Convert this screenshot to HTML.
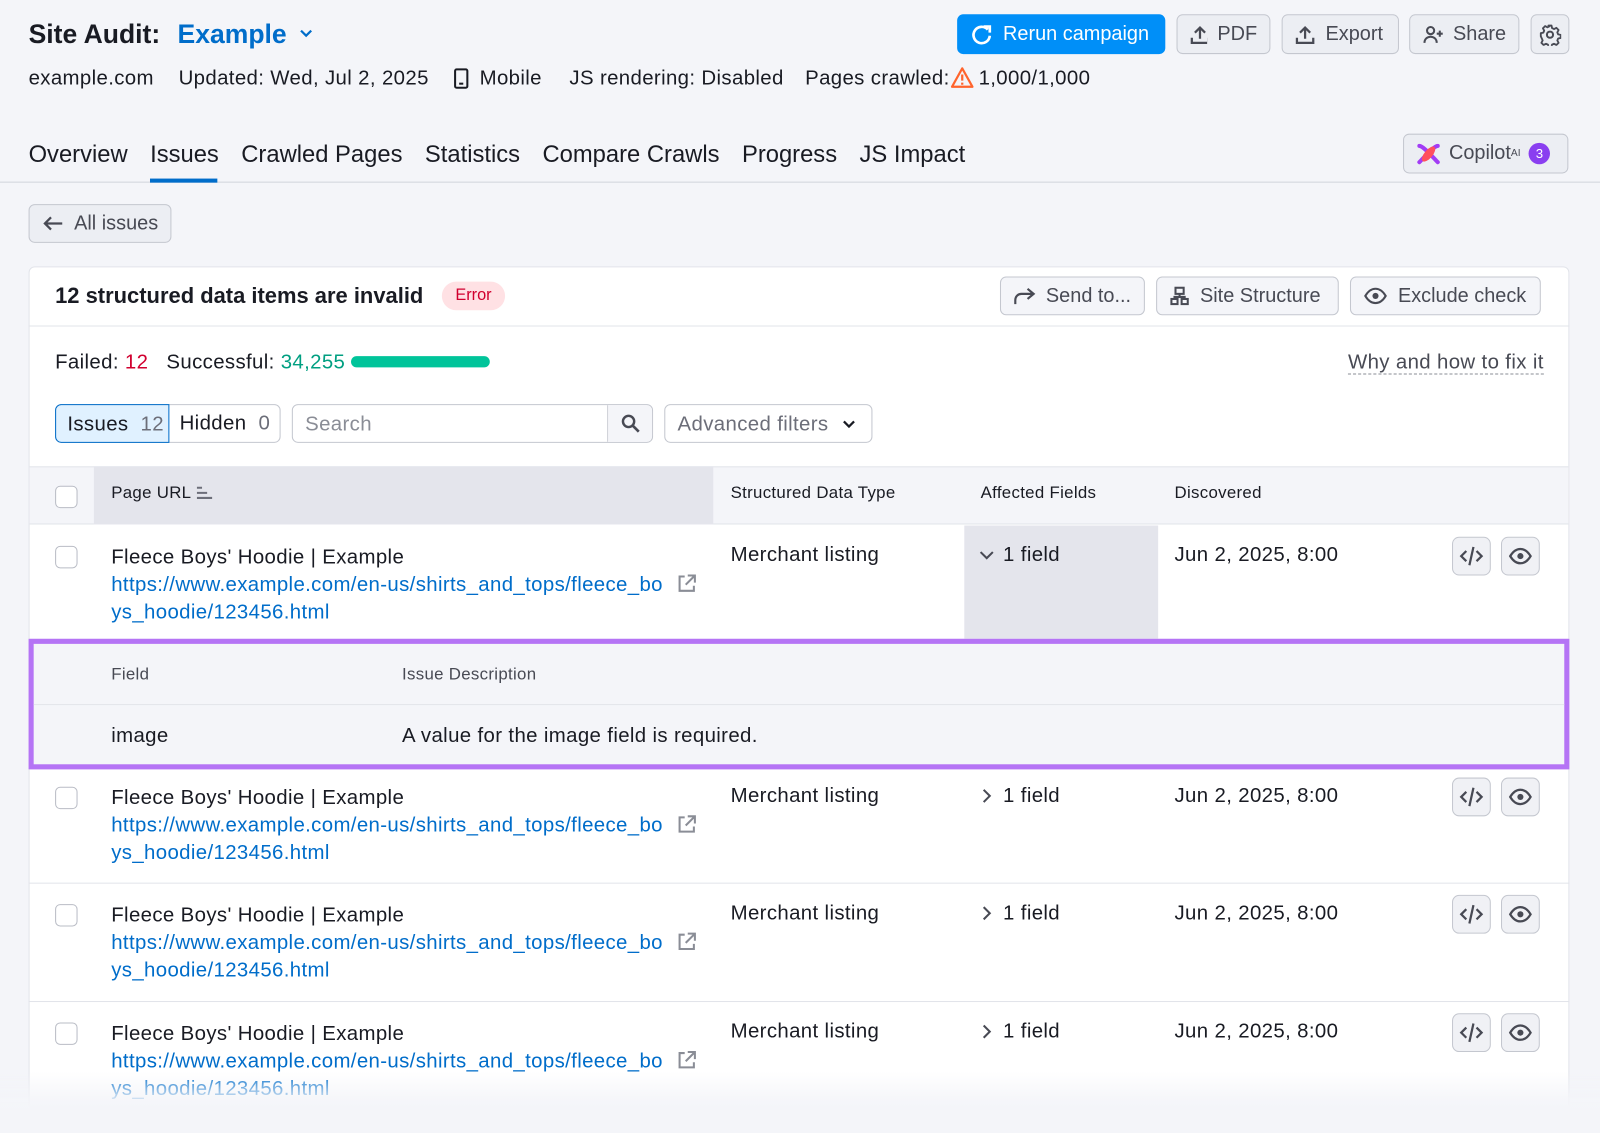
<!DOCTYPE html>
<html><head><meta charset="utf-8"><style>
*{box-sizing:border-box;margin:0;padding:0}
html,body{width:1600px;height:1104px;overflow:hidden;background:#f4f5f9}
body{font-family:"Liberation Sans",sans-serif;color:#191b23}
#w{position:absolute;left:0;top:0;width:1568px;height:1082px;transform:scale(1.0204);transform-origin:0 0}
.abs{position:absolute;white-space:nowrap}
.btn{position:absolute;border:1px solid #c4c7cf;border-radius:6px;background:#eceef3;color:#484a54;font-size:19.5px;display:flex;align-items:center;gap:10px;padding:0 12px;height:38px;white-space:nowrap}
.wbtn{background:#f4f5f9}
svg{display:block}
.t19{font-size:20px;letter-spacing:.35px}
.th{font-size:16.5px;letter-spacing:.3px}
.cb{position:absolute;width:22px;height:22px;border:1.5px solid #b9bcc5;border-radius:5px;background:#fff}
.link{color:#006dca}
.ico{position:absolute;width:38px;height:38px;border:1px solid #c4c7cf;border-radius:7px;background:#f0f1f5;display:flex;align-items:center;justify-content:center}
</style></head><body><div id="w">
<div class="abs" style="left:28px;top:18px;font-size:26px;font-weight:bold">Site Audit:</div>
<div class="abs" style="left:174px;top:18px;font-size:26px;font-weight:bold;color:#006dca">Example</div>
<svg class="abs" style="left:292px;top:26px" width="16" height="14"><path d="M3 4l5 5 5-5" stroke="#006dca" stroke-width="2.2" fill="none"/></svg>
<div class="abs t19" style="left:28px;top:66px">example.com</div>
<div class="abs t19" style="left:175px;top:66px">Updated: Wed, Jul 2, 2025</div>
<svg class="abs" style="left:444px;top:66px" width="16" height="22"><rect x="2" y="2" width="12" height="18" rx="1.5" stroke="#191b23" stroke-width="2" fill="none"/><rect x="6" y="15" width="4" height="2" fill="#191b23"/></svg>
<div class="abs t19" style="left:470px;top:66px">Mobile</div>
<div class="abs t19" style="left:558px;top:66px">JS rendering: Disabled</div>
<div class="abs t19" style="left:789px;top:66px">Pages crawled:</div>
<svg class="abs" style="left:931px;top:64px" width="24" height="24"><path d="M12 3L22 21H2Z" stroke="#ff642d" stroke-width="2.2" fill="none" stroke-linejoin="round"/><path d="M12 9v6M12 17v2" stroke="#ff642d" stroke-width="2.2"/></svg>
<div class="abs t19" style="left:959px;top:66px">1,000/1,000</div>

<div class="btn" style="left:938px;top:14px;width:204px;height:39px;background:#008ff8;border-color:#008ff8;color:#fff;font-size:19.5px">
<svg width="22" height="22"><path d="M17 6A8 8 0 1 0 19 12" stroke="#fff" stroke-width="2.6" fill="none"/><path d="M13 3h6v6" stroke="#fff" stroke-width="2.6" fill="none"/></svg>Rerun campaign</div>
<div class="btn" style="left:1153px;top:14px;width:92px;height:39px"><svg width="20" height="20"><path d="M10 14V3M5 8l5-5 5 5M2 13v5h16v-5" stroke="#484a54" stroke-width="2.2" fill="none"/></svg>PDF</div>
<div class="btn" style="left:1256px;top:14px;width:115px;height:39px"><svg width="20" height="20"><path d="M10 14V3M5 8l5-5 5 5M2 13v5h16v-5" stroke="#484a54" stroke-width="2.2" fill="none"/></svg>Export</div>
<div class="btn" style="left:1381px;top:14px;width:108px;height:39px"><svg width="22" height="20"><circle cx="8" cy="6" r="3.5" stroke="#484a54" stroke-width="2" fill="none"/><path d="M2 18c0-4 3-6 6-6s6 2 6 6" stroke="#484a54" stroke-width="2" fill="none"/><path d="M17 6v6M14 9h6" stroke="#484a54" stroke-width="2"/></svg>Share</div>
<div class="btn" style="left:1500px;top:14px;width:38px;height:39px;padding:0;justify-content:center"><svg width="22" height="22" viewBox="0 0 22 22"><circle cx="11" cy="11" r="3" stroke="#484a54" stroke-width="2" fill="none"/><path d="M9.5 2h3l.5 2.5 2 1 2.3-1.2 2.1 2.1-1.2 2.3.8 2 2.5.5v3l-2.5.5-.8 2 1.2 2.3-2.1 2.1-2.3-1.2-2 .8-.5 2.5h-3l-.5-2.5-2-.8-2.3 1.2-2.1-2.1 1.2-2.3-.8-2L2 12.5v-3l2.5-.5.8-2-1.2-2.3 2.1-2.1 2.3 1.2 2-1z" stroke="#484a54" stroke-width="1.8" fill="none" stroke-linejoin="round"/></svg></div>

<div class="abs" style="left:0;top:178px;width:1600px;height:1px;background:#d1d4db"></div>
<div class="abs" style="left:28px;top:138px;font-size:23.3px;display:flex;gap:22px;white-space:nowrap"><span>Overview</span><span>Issues</span><span>Crawled Pages</span><span>Statistics</span><span>Compare Crawls</span><span>Progress</span><span>JS Impact</span></div>
<div class="abs" style="left:147px;top:175px;width:66px;height:4px;background:#006dca"></div>
<div class="btn" style="left:1375px;top:131px;width:162px;height:39px;font-size:19.5px;gap:8px">
<svg width="24" height="24"><path d="M3 4c4 0 14 12 18 16M21 4C17 4 7 16 3 20" stroke="#a23cf5" stroke-width="4" stroke-linecap="round"/><ellipse cx="12" cy="12" rx="4" ry="9" transform="rotate(40 12 12)" fill="#ff4f5e"/></svg>Copilot<sup style="font-size:10px;margin-left:-8px">AI</sup><span style="width:21px;height:21px;border-radius:50%;background:#8a3ff0;color:#fff;font-size:13px;display:flex;align-items:center;justify-content:center">3</span></div>

<div class="btn" style="left:28px;top:200px;width:140px;height:38px"><svg width="22" height="16"><path d="M20 8H3M9 2L3 8l6 6" stroke="#484a54" stroke-width="2.2" fill="none"/></svg>All issues</div>

<div class="abs" style="left:28px;top:261px;width:1510px;height:843px;background:#fff;border:1px solid #e2e4ea;border-radius:6px"></div>
<div class="abs" style="left:28px;top:319px;width:1510px;height:1px;background:#e2e4ea"></div>
<div class="abs" style="left:54px;top:278px;font-size:21.5px;font-weight:bold">12 structured data items are invalid</div>
<div class="abs" style="left:433px;top:276px;width:62px;height:28px;border-radius:14px;background:#ffe1e4;color:#d1002f;font-size:16px;display:flex;align-items:center;justify-content:center">Error</div>
<div class="btn wbtn" style="left:980px;top:271px;width:142px"><svg width="22" height="20"><path d="M2 18v-4a6 6 0 0 1 6-6h12M14 3l6 5-6 5" stroke="#484a54" stroke-width="2.1" fill="none"/></svg>Send to...</div>
<div class="btn wbtn" style="left:1133px;top:271px;width:179px"><svg width="20" height="20"><rect x="6" y="2" width="8" height="6" stroke="#484a54" stroke-width="2" fill="none"/><rect x="2" y="13" width="6" height="5" stroke="#484a54" stroke-width="2" fill="none"/><rect x="12" y="13" width="6" height="5" stroke="#484a54" stroke-width="2" fill="none"/><path d="M10 8v3M5 13v-2h10v2" stroke="#484a54" stroke-width="2" fill="none"/></svg>Site Structure</div>
<div class="btn wbtn" style="left:1323px;top:271px;width:187px"><svg width="24" height="20"><path d="M2 10c3-5 6-7 10-7s7 2 10 7c-3 5-6 7-10 7S5 15 2 10z" stroke="#484a54" stroke-width="2" fill="none"/><circle cx="12" cy="10" r="3" fill="#484a54"/></svg>Exclude check</div>

<div class="abs t19" style="left:54px;top:344px">Failed: <span style="color:#d1002f">12</span>&nbsp;&nbsp;&nbsp;Successful: <span style="color:#009f81">34,255</span></div>
<div class="abs" style="left:344px;top:349px;width:136px;height:11px;border-radius:6px;background:#00c49a"></div>
<div class="abs t19" style="left:1321px;top:344px;color:#484a54;border-bottom:1.5px dashed #8a8d96;line-height:22px">Why and how to fix it</div>

<div class="abs" style="left:54px;top:396px;width:221px;height:38px;border:1px solid #c4c7cf;border-radius:6px;background:#fff"></div>
<div class="abs t19" style="left:54px;top:396px;width:112px;height:38px;border:1px solid #006dca;border-radius:6px 0 0 6px;background:#e0f1ff;padding:8px 11px">Issues <span style="color:#6c6e79">&nbsp;12</span></div>
<div class="abs t19" style="left:176px;top:404px">Hidden <span style="color:#6c6e79">&nbsp;0</span></div>
<div class="abs t19" style="left:286px;top:396px;width:354px;height:38px;border:1px solid #c4c7cf;border-radius:6px;background:#fff;color:#8a8d96;padding:8px 12px">Search</div>
<div class="abs" style="left:595px;top:397px;width:44px;height:36px;border-left:1px solid #c4c7cf;background:#f4f5f9;border-radius:0 6px 6px 0"><svg style="margin:8px 12px" width="20" height="20"><circle cx="8" cy="8" r="5.5" stroke="#484a54" stroke-width="2.4" fill="none"/><path d="M12 12l6 6" stroke="#484a54" stroke-width="2.6"/></svg></div>
<div class="abs t19" style="left:651px;top:396px;width:204px;height:38px;border:1px solid #c4c7cf;border-radius:6px;background:#fff;color:#6c6e79;padding:8px 12px">Advanced filters</div>
<svg class="abs" style="left:824px;top:409px" width="16" height="14"><path d="M3 4l5 5 5-5" stroke="#191b23" stroke-width="2.2" fill="none"/></svg>

<div class="abs" style="left:29px;top:457px;width:1508px;height:57px;background:#f4f5f9;border-top:1px solid #e2e4ea;border-bottom:1px solid #e2e4ea"></div>
<div class="abs" style="left:92px;top:457px;width:607px;height:57px;background:#e4e5ec"></div>
<div class="cb" style="left:54px;top:476px"></div>
<div class="abs th" style="left:109px;top:474px">Page URL</div>
<svg class="abs" style="left:192px;top:476px" width="16" height="14"><path d="M1 2h5M1 7h10M1 12h15" stroke="#6c6e79" stroke-width="2"/></svg>
<div class="abs th" style="left:716px;top:474px">Structured Data Type</div>
<div class="abs th" style="left:961px;top:474px">Affected Fields</div>
<div class="abs th" style="left:1151px;top:474px">Discovered</div>

<div class="abs" style="left:945px;top:515px;width:190px;height:111px;background:#e4e5ec"></div>
<div class="abs" style="left:28px;top:626px;width:1510px;height:128px;border:5px solid #b574f5;background:#f4f5f9"></div>
<div class="abs" style="left:33px;top:690px;width:1500px;height:1px;background:#e2e4ea"></div>
<div class="abs th" style="left:109px;top:652px;color:#484a54">Field</div>
<div class="abs th" style="left:394px;top:652px;color:#484a54">Issue Description</div>
<div class="abs t19" style="left:109px;top:710px">image</div>
<div class="abs t19" style="left:394px;top:710px">A value for the image field is required.</div>

<div class="abs" style="left:28px;top:865px;width:1510px;height:1px;background:#e2e4ea"></div>
<div class="abs" style="left:28px;top:981px;width:1510px;height:1px;background:#e2e4ea"></div>

<div class="cb" style="left:54px;top:535px"></div>
<div class="abs t19" style="left:109px;top:533px;line-height:27px">Fleece Boys' Hoodie | Example<br><span class="link">https://www.example.com/en-us/shirts_and_tops/fleece_bo<br>ys_hoodie/123456.html</span></div>
<svg class="abs" style="left:663px;top:562px" width="20" height="20"><path d="M8 3H3v14h14v-5" stroke="#8a8d96" stroke-width="2" fill="none"/><path d="M11 2h7v7M18 2l-9 9" stroke="#8a8d96" stroke-width="2" fill="none"/></svg>
<div class="abs t19" style="left:716px;top:533px">Merchant listing</div>
<svg class="abs" style="left:959px;top:537px" width="16" height="14"><path d="M2 4l6 6 6-6" stroke="#484a54" stroke-width="2" fill="none"/></svg>
<div class="abs t19" style="left:983px;top:533px">1 field</div>
<div class="abs t19" style="left:1151px;top:533px">Jun 2, 2025, 8:00</div>
<div class="ico" style="left:1423px;top:526px"><svg width="24" height="22"><path d="M7 6l-5 5 5 5M17 6l5 5-5 5M14 2l-4 18" stroke="#484a54" stroke-width="2.2" fill="none"/></svg></div>
<div class="ico" style="left:1471px;top:526px"><svg width="24" height="20"><path d="M2 10c3-5 6-7 10-7s7 2 10 7c-3 5-6 7-10 7S5 15 2 10z" stroke="#484a54" stroke-width="2.2" fill="none"/><circle cx="12" cy="10" r="3" fill="#484a54"/></svg></div>

<div class="cb" style="left:54px;top:771px"></div>
<div class="abs t19" style="left:109px;top:769px;line-height:27px">Fleece Boys' Hoodie | Example<br><span class="link">https://www.example.com/en-us/shirts_and_tops/fleece_bo<br>ys_hoodie/123456.html</span></div>
<svg class="abs" style="left:663px;top:798px" width="20" height="20"><path d="M8 3H3v14h14v-5" stroke="#8a8d96" stroke-width="2" fill="none"/><path d="M11 2h7v7M18 2l-9 9" stroke="#8a8d96" stroke-width="2" fill="none"/></svg>
<div class="abs t19" style="left:716px;top:769px">Merchant listing</div>
<svg class="abs" style="left:960px;top:772px" width="14" height="16"><path d="M4 2l6 6-6 6" stroke="#484a54" stroke-width="2" fill="none"/></svg>
<div class="abs t19" style="left:983px;top:769px">1 field</div>
<div class="abs t19" style="left:1151px;top:769px">Jun 2, 2025, 8:00</div>
<div class="ico" style="left:1423px;top:762px"><svg width="24" height="22"><path d="M7 6l-5 5 5 5M17 6l5 5-5 5M14 2l-4 18" stroke="#484a54" stroke-width="2.2" fill="none"/></svg></div>
<div class="ico" style="left:1471px;top:762px"><svg width="24" height="20"><path d="M2 10c3-5 6-7 10-7s7 2 10 7c-3 5-6 7-10 7S5 15 2 10z" stroke="#484a54" stroke-width="2.2" fill="none"/><circle cx="12" cy="10" r="3" fill="#484a54"/></svg></div>

<div class="cb" style="left:54px;top:886px"></div>
<div class="abs t19" style="left:109px;top:884px;line-height:27px">Fleece Boys' Hoodie | Example<br><span class="link">https://www.example.com/en-us/shirts_and_tops/fleece_bo<br>ys_hoodie/123456.html</span></div>
<svg class="abs" style="left:663px;top:913px" width="20" height="20"><path d="M8 3H3v14h14v-5" stroke="#8a8d96" stroke-width="2" fill="none"/><path d="M11 2h7v7M18 2l-9 9" stroke="#8a8d96" stroke-width="2" fill="none"/></svg>
<div class="abs t19" style="left:716px;top:884px">Merchant listing</div>
<svg class="abs" style="left:960px;top:887px" width="14" height="16"><path d="M4 2l6 6-6 6" stroke="#484a54" stroke-width="2" fill="none"/></svg>
<div class="abs t19" style="left:983px;top:884px">1 field</div>
<div class="abs t19" style="left:1151px;top:884px">Jun 2, 2025, 8:00</div>
<div class="ico" style="left:1423px;top:877px"><svg width="24" height="22"><path d="M7 6l-5 5 5 5M17 6l5 5-5 5M14 2l-4 18" stroke="#484a54" stroke-width="2.2" fill="none"/></svg></div>
<div class="ico" style="left:1471px;top:877px"><svg width="24" height="20"><path d="M2 10c3-5 6-7 10-7s7 2 10 7c-3 5-6 7-10 7S5 15 2 10z" stroke="#484a54" stroke-width="2.2" fill="none"/><circle cx="12" cy="10" r="3" fill="#484a54"/></svg></div>

<div class="cb" style="left:54px;top:1002px"></div>
<div class="abs t19" style="left:109px;top:1000px;line-height:27px">Fleece Boys' Hoodie | Example<br><span class="link">https://www.example.com/en-us/shirts_and_tops/fleece_bo<br>ys_hoodie/123456.html</span></div>
<svg class="abs" style="left:663px;top:1029px" width="20" height="20"><path d="M8 3H3v14h14v-5" stroke="#8a8d96" stroke-width="2" fill="none"/><path d="M11 2h7v7M18 2l-9 9" stroke="#8a8d96" stroke-width="2" fill="none"/></svg>
<div class="abs t19" style="left:716px;top:1000px">Merchant listing</div>
<svg class="abs" style="left:960px;top:1003px" width="14" height="16"><path d="M4 2l6 6-6 6" stroke="#484a54" stroke-width="2" fill="none"/></svg>
<div class="abs t19" style="left:983px;top:1000px">1 field</div>
<div class="abs t19" style="left:1151px;top:1000px">Jun 2, 2025, 8:00</div>
<div class="ico" style="left:1423px;top:993px"><svg width="24" height="22"><path d="M7 6l-5 5 5 5M17 6l5 5-5 5M14 2l-4 18" stroke="#484a54" stroke-width="2.2" fill="none"/></svg></div>
<div class="ico" style="left:1471px;top:993px"><svg width="24" height="20"><path d="M2 10c3-5 6-7 10-7s7 2 10 7c-3 5-6 7-10 7S5 15 2 10z" stroke="#484a54" stroke-width="2.2" fill="none"/><circle cx="12" cy="10" r="3" fill="#484a54"/></svg></div>

<div class="abs" style="left:0;top:1050px;width:1600px;height:60px;background:linear-gradient(rgba(244,245,249,0),rgba(244,245,249,.85) 45%,#f4f5f9 60%)"></div>
</div></body></html>
